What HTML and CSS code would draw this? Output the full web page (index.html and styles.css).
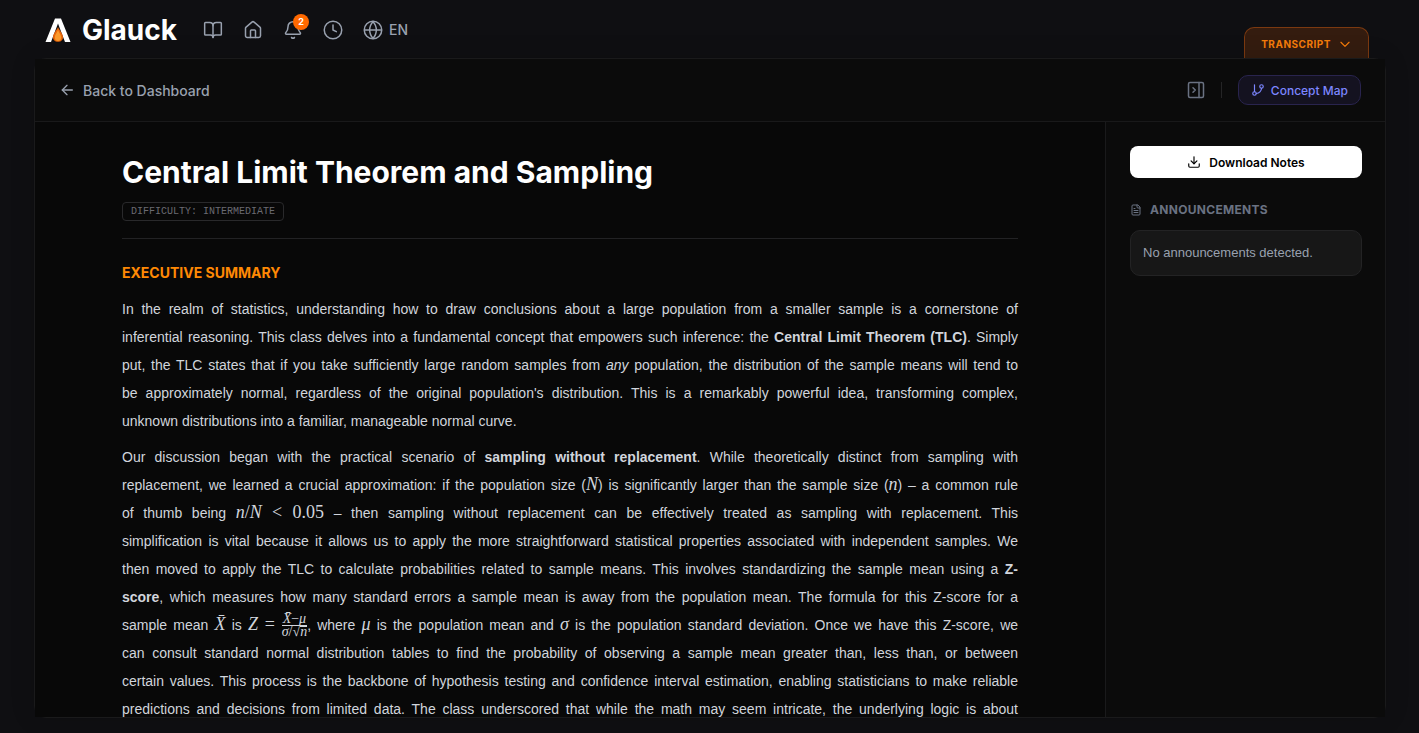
FILE: index.html
```html
<!DOCTYPE html>
<html lang="en">
  <head>
    <meta charset="utf-8">
    <meta name="viewport" content="width=device-width, initial-scale=1">
    <title>Glauck - Central Limit Theorem and Sampling</title>
    <link rel="stylesheet" href="styles.css">
  </head>

<body>
    <header class="topbar">
      <a class="brand" href="#">
        <svg width="26" height="24" viewBox="0 0 26 24" aria-hidden="true">
          <path d="M0.500 24 10 0.500h6L25.500 24H20L13 5.500 6 24z" fill="#fff"/>
          <path d="M13 9c1 3 5 6.500 5 10.200 0 2.800-2.200 4.600-5 4.600s-5-1.800-5-4.600C8 15.500 12 12 13 9z" fill="#e8650a"/>
          <path d="M13 12c.8 2.500 3.200 4.800 3.200 7.600 0 2-1.400 3.400-3.200 3.400s-3.200-1.400-3.200-3.400c0-2.800 2.400-5.100 3.200-7.600z" fill="#fb9a2c"/>
        </svg>
        <span>Glauck</span>
      </a>
      <nav class="nav">
        <a href="#" aria-label="Library">
          <svg class="icon" width="20" height="20" viewBox="0 0 24 24"><path d="M12 7v14"/><path d="M3 18a1 1 0 0 1-1-1V4a1 1 0 0 1 1-1h5a4 4 0 0 1 4 4 4 4 0 0 1 4-4h5a1 1 0 0 1 1 1v13a1 1 0 0 1-1 1h-6a3 3 0 0 0-3 3 3 3 0 0 0-3-3z"/></svg>
        </a>
        <a href="#" aria-label="Home">
          <svg class="icon" width="20" height="20" viewBox="0 0 24 24"><path d="M15 21v-8a1 1 0 0 0-1-1h-4a1 1 0 0 0-1 1v8"/><path d="M3 10a2 2 0 0 1 .709-1.528l7-6a2 2 0 0 1 2.582 0l7 6A2 2 0 0 1 21 10v9a2 2 0 0 1-2 2H5a2 2 0 0 1-2-2z"/></svg>
        </a>
        <button class="bell" type="button" aria-label="Notifications">
          <svg class="icon" width="20" height="20" viewBox="0 0 24 24"><path d="M10.268 21a2 2 0 0 0 3.464 0"/><path d="M3.262 15.326A1 1 0 0 0 4 17h16a1 1 0 0 0 .740-1.673C19.410 13.956 18 12.499 18 8A6 6 0 0 0 6 8c0 4.499-1.411 5.956-2.738 7.326"/></svg>
          <span class="badge">2</span>
        </button>
        <button type="button" aria-label="History">
          <svg class="icon" width="20" height="20" viewBox="0 0 24 24"><circle cx="12" cy="12" r="10.500"/><path d="M12 6v6l4 2"/></svg>
        </button>
        <button class="lang" type="button">
          <svg class="icon" width="20" height="20" viewBox="0 0 24 24"><circle cx="12" cy="12" r="10.500"/><path d="M12 2a14.500 14.500 0 0 0 0 20 14.500 14.500 0 0 0 0-20"/><path d="M2 12h20"/></svg>
          <span>EN</span>
        </button>
      </nav>
      <button class="transcript" type="button">
        <span>TRANSCRIPT</span>
        <svg class="icon" width="14" height="14" viewBox="0 0 24 24"><path d="m5 9 7 7 7-7"/></svg>
      </button>
    </header>

    <div class="panel">
      <div class="toolbar">
        <a class="back" href="#">
          <svg class="icon" width="16" height="16" viewBox="0 0 24 24"><path d="m12 19-7-7 7-7"/><path d="M20 12H5"/></svg>
          <span>Back to Dashboard</span>
        </a>
        <div class="tools">
          <button class="collapse" type="button" aria-label="Collapse sidebar">
            <svg class="icon" width="18" height="18" viewBox="0 0 24 24"><rect x="2" y="2" width="20" height="20" rx="2"/><path d="M16 2v20"/><path d="m8 9 3 3-3 3"/></svg>
          </button>
          <button class="concept" type="button">
            <svg class="icon" width="14" height="14" viewBox="0 0 24 24"><path d="M6 3v12"/><circle cx="18" cy="6" r="3"/><circle cx="6" cy="18" r="3"/><path d="M18 9a9 9 0 0 1-9 9"/></svg>
            <span>Concept Map</span>
          </button>
        </div>
      </div>

      <div class="content">
        <main class="notes">
          <article>
            <h1>Central Limit Theorem and Sampling</h1>
            <span class="difficulty">DIFFICULTY: INTERMEDIATE</span>
            <hr>
            <h2>EXECUTIVE SUMMARY</h2>
            <p>
              In the realm of statistics, understanding how to draw conclusions about a large population from a smaller sample is a cornerstone of<br>
              inferential reasoning. This class delves into a fundamental concept that empowers such inference: the <strong>Central Limit Theorem (TLC)</strong>. Simply<br>
              put, the TLC states that if you take sufficiently large random samples from <em>any</em> population, the distribution of the sample means will tend to<br>
              be approximately normal, regardless of the original population's distribution. This is a remarkably powerful idea, transforming complex,<br>
              <span class="last">unknown distributions into a familiar, manageable normal curve.</span>
            </p>
            <p>
              Our discussion began with the practical scenario of <strong>sampling without replacement</strong>. While theoretically distinct from sampling with<br>
              replacement, we learned a crucial approximation: if the population size (<span class="math"><i>N</i></span>) is significantly larger than the sample size (<span class="math"><i>n</i></span>) – a common rule<br>
              of thumb being <span class="math"><i>n</i>/<i>N</i> &lt; 0.05</span> – then sampling without replacement can be effectively treated as sampling with replacement. This<br>
              simplification is vital because it allows us to apply the more straightforward statistical properties associated with independent samples. We<br>
              then moved to apply the TLC to calculate probabilities related to sample means. This involves standardizing the sample mean using a <strong>Z-<br>
              score</strong>, which measures how many standard errors a sample mean is away from the population mean. The formula for this Z-score for a<br>
              sample mean <span class="math"><i>X̄</i></span> is <span class="math"><i>Z</i> = <span class="frac"><span class="num"><i>X̄</i>−<i>μ</i></span><span class="den"><i>σ</i>/√<i class="root">n</i></span></span></span>, where <span class="math"><i>μ</i></span> is the population mean and <span class="math"><i>σ</i></span> is the population standard deviation. Once we have this Z-score, we<br>
              can consult standard normal distribution tables to find the probability of observing a sample mean greater than, less than, or between<br>
              certain values. This process is the backbone of hypothesis testing and confidence interval estimation, enabling statisticians to make reliable<br>
              predictions and decisions from limited data. The class underscored that while the math may seem intricate, the underlying logic is about
            </p>
          </article>
        </main>

        <aside class="sidebar">
          <button class="download" type="button">
            <svg class="icon" width="14" height="14" viewBox="0 0 24 24"><path d="M12 15V3"/><path d="M21 15v4a2 2 0 0 1-2 2H5a2 2 0 0 1-2-2v-4"/><path d="m7 10 5 5 5-5"/></svg>
            <span>Download Notes</span>
          </button>
          <h3>
            <svg class="icon" width="12" height="12" viewBox="0 0 24 24"><path d="M15 2H6a2 2 0 0 0-2 2v16a2 2 0 0 0 2 2h12a2 2 0 0 0 2-2V7z"/><path d="M14 2v4a2 2 0 0 0 2 2h4"/><path d="M10 9H8"/><path d="M16 13H8"/><path d="M16 17H8"/></svg>
            <span>ANNOUNCEMENTS</span>
          </h3>
          <div class="empty">No announcements detected.</div>
        </aside>
      </div>
    </div>
</body>

</html>
```
FILE: styles.css
```css
* {
  box-sizing: border-box;
}

body {
  margin: 0;
  height: 100vh;
  padding: 0 33px 15px 34px;
  display: flex;
  flex-direction: column;
  overflow: hidden;
  background: #0f0f12;
  color: #d1d5dc;
  font-family: Inter, "Liberation Sans", sans-serif;
  font-size: 14px;
}

a {
  color: inherit;
  text-decoration: none;
}

button {
  font: inherit;
  color: inherit;
  background: none;
  border: 0;
  padding: 0;
  cursor: pointer;
}

.icon {
  display: block;
  flex: none;
  fill: none;
  stroke: currentColor;
  stroke-width: 2;
  stroke-linecap: round;
  stroke-linejoin: round;
}

/* Top bar */
.topbar {
  flex: none;
  height: 59px;
  display: flex;
  align-items: center;
  padding: 0 17px 0 11px;
}

.brand {
  display: flex;
  align-items: center;
  gap: 11px;
  color: #fff;
  font-size: 28px;
  font-weight: 700;
}

.nav {
  display: flex;
  align-items: center;
  gap: 20px;
  margin-left: 26px;
  color: #99a1af;
}

.nav .icon {
  stroke-width: 1.8;
}

.bell {
  position: relative;
}

.badge {
  position: absolute;
  top: -6px;
  right: -6px;
  width: 16px;
  height: 16px;
  border-radius: 50%;
  background: #ff6900;
  color: #fff;
  font-size: 9px;
  font-weight: 700;
  line-height: 16px;
}

.lang {
  display: flex;
  align-items: center;
  gap: 6px;
  font-weight: 500;
}

.transcript {
  align-self: flex-end;
  display: flex;
  align-items: center;
  gap: 7px;
  height: 32px;
  margin-left: auto;
  padding: 0 16px;
  border: 1px solid #7b3910;
  border-bottom: 0;
  border-radius: 10px 10px 0 0;
  background: #341c0f;
  color: #f57c0a;
  font-size: 10px;
  font-weight: 700;
  letter-spacing: 0.05em;
}

/* Panel */
.panel {
  flex: 1;
  min-height: 0;
  margin-top: -1px;
  display: flex;
  flex-direction: column;
  border: 1px solid #1a1a1b;
  border-radius: 12px;
  background: #0b0b0b;
  box-shadow: 0 0 25px rgba(0, 0, 0, 0.15);
}

.toolbar {
  flex: none;
  height: 63px;
  display: flex;
  align-items: center;
  justify-content: space-between;
  padding: 0 24px;
  border-bottom: 1px solid #19191a;
  background: #0b0b0b;
  color: #99a1af;
}

.back {
  display: flex;
  align-items: center;
  gap: 8px;
  font-weight: 500;
}

.tools {
  display: flex;
  align-items: center;
}

.collapse {
  height: 16px;
  display: flex;
  align-items: center;
  padding-right: 16px;
  margin-right: 16px;
  border-right: 1px solid #252526;
  color: #6a7282;
}

.concept {
  display: flex;
  align-items: center;
  gap: 6px;
  height: 30px;
  padding: 0 12px;
  border: 1px solid #29244e;
  border-radius: 10px;
  background: #141220;
  color: #7c86ff;
  font-size: 12px;
  font-weight: 500;
}

.content {
  flex: 1;
  min-height: 0;
  display: flex;
}

.notes {
  flex: 1;
  min-width: 0;
  padding: 32px 24px 0;
  overflow: hidden;
  background: #080808;
}

article {
  max-width: 896px;
  margin: 0 auto;
}

h1 {
  margin: 0 0 12px;
  color: #fff;
  font-size: 30px;
  line-height: 36px;
}

.difficulty {
  display: block;
  width: fit-content;
  padding: 0 8px;
  border: 1px solid #29292b;
  border-radius: 4px;
  color: #6a6a72;
  font: 10px/17px "Liberation Mono", monospace;
}

hr {
  margin: 17px 0 24px;
  border: 0;
  border-top: 1px solid #222224;
}

h2 {
  margin: 0 0 12px;
  color: #ff8904;
  font-size: 14px;
  line-height: 20px;
}

p {
  margin: 0 0 8px;
  font-family: "Liberation Sans", Arial, sans-serif;
  line-height: 28px;
  text-align: justify;
  text-align-last: justify;
}

.last {
  display: block;
  text-align-last: left;
}

/* Formulas */
.math {
  font-family: "Liberation Serif", serif;
  font-size: 18px;
  line-height: 16px;
  white-space: nowrap;
}

.frac {
  display: inline-flex;
  flex-direction: column;
  vertical-align: middle;
  font-size: 14px;
  line-height: 12px;
  text-align-last: center;
}

.den {
  border-top: 1px solid;
}

.root {
  display: inline-block;
  border-top: 1px solid;
  line-height: 9px;
}

/* Sidebar */
.sidebar {
  flex: none;
  width: 280px;
  padding: 24px 23px 24px 24px;
  border-left: 1px solid #1a1a1b;
  background: #0b0b0b;
}

.download {
  width: 100%;
  height: 32px;
  display: flex;
  align-items: center;
  justify-content: center;
  gap: 8px;
  border-radius: 8px;
  background: #fff;
  color: #000;
  font-size: 12px;
  font-weight: 600;
}

h3 {
  display: flex;
  align-items: center;
  gap: 8px;
  margin: 24px 0 12px;
  color: #6a7282;
  font-size: 12px;
  line-height: 16px;
  font-weight: 700;
  letter-spacing: 0.025em;
}

.empty {
  padding: 12px;
  border: 1px solid #232324;
  border-radius: 10px;
  background: #171717;
  color: #99a1af;
  font-family: "Liberation Sans", Arial, sans-serif;
  font-size: 13px;
  line-height: 20px;
}
```
